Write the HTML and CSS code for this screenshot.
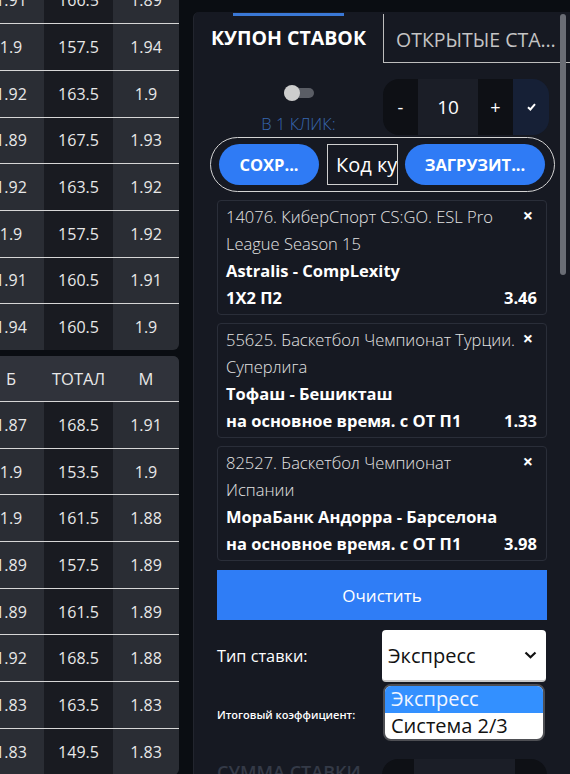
FILE: index.html
```html
<!DOCTYPE html>
<html lang="ru">
<head>
    <meta charset="UTF-8">
    <meta name="viewport" content="width=device-width, initial-scale=1.0">
    <title>Купон ставок</title>
    <link rel="stylesheet" href="styles.css">
</head>
<body>
    <!-- Линия тоталов -->
    <div class="lines">
        <div class="odds">
            <div class="odds-row"><span>1.91</span><span class="mid">166.5</span><span>1.89</span></div>
            <div class="odds-row"><span>1.9</span><span class="mid">157.5</span><span>1.94</span></div>
            <div class="odds-row"><span>1.92</span><span class="mid">163.5</span><span>1.9</span></div>
            <div class="odds-row"><span>1.89</span><span class="mid">167.5</span><span>1.93</span></div>
            <div class="odds-row"><span>1.92</span><span class="mid">163.5</span><span>1.92</span></div>
            <div class="odds-row"><span>1.9</span><span class="mid">157.5</span><span>1.92</span></div>
            <div class="odds-row"><span>1.91</span><span class="mid">160.5</span><span>1.91</span></div>
            <div class="odds-row"><span>1.94</span><span class="mid">160.5</span><span>1.9</span></div>
        </div>
        <div class="odds">
            <div class="odds-head"><span>Б</span><span>ТОТАЛ</span><span>М</span></div>
            <div class="odds-row"><span>1.87</span><span class="mid">168.5</span><span>1.91</span></div>
            <div class="odds-row"><span>1.9</span><span class="mid">153.5</span><span>1.9</span></div>
            <div class="odds-row"><span>1.9</span><span class="mid">161.5</span><span>1.88</span></div>
            <div class="odds-row"><span>1.89</span><span class="mid">157.5</span><span>1.89</span></div>
            <div class="odds-row"><span>1.89</span><span class="mid">161.5</span><span>1.89</span></div>
            <div class="odds-row"><span>1.92</span><span class="mid">168.5</span><span>1.88</span></div>
            <div class="odds-row"><span>1.83</span><span class="mid">163.5</span><span>1.83</span></div>
            <div class="odds-row"><span>1.83</span><span class="mid">149.5</span><span>1.83</span></div>
        </div>
    </div>

    <!-- Купон -->
    <div class="coupon">
        <div class="scroll-thumb"></div>

        <div class="tabs">
            <div class="tab tab-active">КУПОН СТАВОК</div>
            <div class="tab">ОТКРЫТЫЕ СТАВКИ</div>
        </div>

        <div class="controls">
            <div class="one-click">
                <div class="switch"><span class="knob"></span></div>
                <div class="one-click-label">В 1 КЛИК:</div>
            </div>
            <div class="stepper">
                <button class="st-btn">-</button>
                <div class="st-val">10</div>
                <button class="st-btn">+</button>
                <button class="st-ok">
                    <svg width="9" height="8" viewBox="0 0 9 8"><path d="M1 4.2 L3.4 6.5 L8 1.2" fill="none" stroke="#fff" stroke-width="2"/></svg>
                </button>
            </div>
        </div>

        <div class="code-box">
            <button class="pill-btn pill-save">СОХР...</button>
            <input class="code-input" type="text" placeholder="Код купона">
            <button class="pill-btn pill-load">ЗАГРУЗИТ...</button>
        </div>

        <div class="bets">
            <div class="bet">
                <div class="bet-head">
                    <span class="bet-title">14076. КиберСпорт CS:GO. ESL Pro League Season 15</span>
                    <span class="bet-close">×</span>
                </div>
                <div class="bet-match">Astralis - CompLexity</div>
                <div class="bet-market"><span>1X2 П2</span><span>3.46</span></div>
            </div>
            <div class="bet">
                <div class="bet-head">
                    <span class="bet-title">55625. Баскетбол Чемпионат Турции. Суперлига</span>
                    <span class="bet-close">×</span>
                </div>
                <div class="bet-match">Тофаш - Бешикташ</div>
                <div class="bet-market"><span>на основное время. с ОТ П1</span><span>1.33</span></div>
            </div>
            <div class="bet">
                <div class="bet-head">
                    <span class="bet-title">82527. Баскетбол Чемпионат Испании</span>
                    <span class="bet-close">×</span>
                </div>
                <div class="bet-match">МораБанк Андорра - Барселона</div>
                <div class="bet-market"><span>на основное время. с ОТ П1</span><span>3.98</span></div>
            </div>

            <button class="clear-btn">Очистить</button>

            <div class="bet-type">
                <span>Тип ставки:</span>
                <div class="select-wrap">
                    <div class="select">
                        <span>Экспресс</span>
                        <svg width="13" height="8" viewBox="0 0 13 8"><path d="M1.5 1.5 L6.5 6.3 L11.5 1.5" fill="none" stroke="#111" stroke-width="2.2"/></svg>
                    </div>
                    <ul class="select-menu">
                        <li class="selected">Экспресс</li>
                        <li>Система 2/3</li>
                    </ul>
                </div>
            </div>

            <div class="total-coef">Итоговый коэффициент:</div>

            <div class="stake">
                <span class="stake-label">СУММА СТАВКИ</span>
                <div class="stake-box"><span></span><span class="stake-mid"></span><span></span></div>
            </div>
        </div>
    </div>
</body>
</html>
```

FILE: styles.css
```css
* {
    box-sizing: border-box;
}

body {
    margin: 0;
    height: 774px;
    overflow: hidden;
    display: flex;
    background-color: #0a0d12;
    font-family: 'Open Sans', 'Noto Sans', sans-serif;
    color: #ffffff;
}

button {
    font-family: inherit;
    border: none;
    color: #ffffff;
    cursor: pointer;
    padding: 0;
}

/* ---- tables on the left ---- */
.lines {
    width: 179px;
    flex: none;
    overflow: hidden;
    margin-top: -23.5px;
    display: flex;
    flex-direction: column;
    gap: 6px;
}

.odds {
    width: 201px;
    margin-left: -22px;
    border-radius: 6px;
    overflow: hidden;
    background-color: #2a2d34;
    flex: none;
}

.odds-row,
.odds-head {
    display: grid;
    grid-template-columns: 66px 69px 66px;
    font-size: 16px;
    color: #e8e8e8;
}

.odds-row {
    height: 46.7px;
    border-top: 1px solid #d6d6d6;
}

.odds-row:first-child {
    border-top: none;
}

.odds-head {
    height: 45px;
    background-color: #30333b;
    font-size: 16.5px;
}

.odds-row span,
.odds-head span {
    display: flex;
    align-items: center;
    justify-content: center;
}

.odds-row .mid {
    background-color: #191b21;
}

/* ---- coupon ---- */
.coupon {
    position: relative;
    flex: 1;
    min-width: 0;
    margin-left: 14px;
    margin-top: 12px;
    background-color: #161922;
    border-left: 1px solid #22252e;
    border-top-left-radius: 6px;
}

.scroll-thumb {
    position: absolute;
    right: 4px;
    top: 2px;
    width: 6px;
    height: 261px;
    border-radius: 3px;
    background-color: #6a6d75;
}

.tabs {
    display: flex;
    height: 51px;
}

.tab {
    flex: 1;
    min-width: 0;
    display: block;
    padding: 3px 4px 0 12px;
    margin-top: 2px;
    font-size: 19.5px;
    line-height: 45px;
    color: #c4c4c4;
    border-left: 1px solid #bdbdbd;
    border-bottom: 1px solid #bdbdbd;
    white-space: nowrap;
    overflow: hidden;
    text-overflow: ellipsis;
}

.tab-active {
    position: relative;
    flex: none;
    width: 189px;
    margin-top: 0;
    padding: 3px 0 0;
    line-height: 45px;
    text-align: center;
    border: none;
    font-weight: 700;
    color: #ffffff;
    overflow: visible;
}

.tab-active::before {
    content: "";
    position: absolute;
    top: 1px;
    left: 39px;
    width: 111px;
    height: 3px;
    background-color: #3a78d6;
}

.controls {
    display: flex;
    margin-top: 16px;
}

.one-click {
    width: 189px;
    padding-left: 20px;
    display: flex;
    flex-direction: column;
    align-items: center;
    padding-top: 9px;
}

.switch {
    width: 30px;
    height: 10px;
    border-radius: 5px;
    background-color: #5a5d65;
    display: flex;
    align-items: center;
}

.knob {
    width: 16px;
    height: 16px;
    flex: none;
    border-radius: 50%;
    background-color: #cdcdcd;
}

.one-click-label {
    margin-top: 14px;
    font-size: 16.5px;
    font-weight: 300;
    color: #3767b0;
}

.stepper {
    display: flex;
    width: 166px;
    height: 56px;
    border-radius: 16px;
    overflow: hidden;
}

.st-btn {
    width: 35px;
    background-color: #0e1015;
    font-size: 18px;
}

.st-val {
    width: 60px;
    display: flex;
    align-items: center;
    justify-content: center;
    background-color: #1b1e27;
    font-size: 19px;
}

.st-ok {
    width: 36px;
    background-color: #162036;
    display: flex;
    align-items: center;
    justify-content: center;
}

.code-box {
    display: flex;
    align-items: center;
    gap: 8px;
    height: 55px;
    margin: 2px 15px 0 16px;
    padding: 0 9px 0 8px;
    border: 1px solid #d4d4d4;
    border-radius: 28px;
}

.pill-btn {
    height: 41px;
    border-radius: 21px;
    background-color: #2f7bf5;
    font-size: 16.5px;
    font-weight: 700;
}

.pill-save {
    width: 100px;
}

.pill-load {
    flex: 1;
    margin-left: -1px;
}

.code-input {
    width: 71px;
    height: 41px;
    padding: 0 0 0 8px;
    border: 1px solid #cfcfcf;
    background-color: transparent;
    color: #ffffff;
    font-family: inherit;
    font-size: 20px;
}

.code-input::placeholder {
    color: #ffffff;
}

.bets {
    display: flex;
    flex-direction: column;
    gap: 8px;
    margin-top: 8px;
    padding: 0 23px 0 23px;
}

.bet {
    border: 1px solid #2a2e39;
    border-radius: 4px;
    padding: 2px 9px 3px 8px;
    font-size: 16.5px;
    line-height: 27px;
}

.bet-head {
    display: flex;
    justify-content: space-between;
    align-items: flex-start;
}

.bet-title {
    flex: 0 1 290px;
    font-weight: 300;
    color: #e4e4e4;
}

.bet-close {
    font-weight: 700;
    font-size: 18px;
    margin-right: 4px;
    line-height: 25px;
}

.bet-match,
.bet-market {
    font-weight: 700;
}

.bet-market {
    display: flex;
    justify-content: space-between;
}

.clear-btn {
    height: 50px;
    margin-top: 1px;
    background-color: #2f7df6;
    font-size: 17px;
}

.bet-type {
    display: flex;
    justify-content: space-between;
    align-items: center;
    margin-top: 2px;
    font-size: 16.3px;
}

.select-wrap {
    position: relative;
    width: 164px;
    margin-right: 1px;
}

.select {
    height: 52px;
    display: flex;
    align-items: center;
    justify-content: space-between;
    padding: 0 9px 0 6px;
    background-color: #ffffff;
    border-radius: 4px;
    border-bottom: 2px solid #c9c9c9;
    color: #111111;
    font-size: 20px;
}

.select-menu {
    position: absolute;
    top: 54px;
    left: 1px;
    width: 162px;
    margin: 0;
    padding: 0;
    list-style: none;
    background-color: #ffffff;
    border: 2px solid #4e4f54;
    border-radius: 8px;
    overflow: hidden;
    font-size: 20px;
    color: #111111;
    line-height: 26.5px;
}

.select-menu li {
    padding-left: 6px;
}

.select-menu .selected {
    background-color: #3390ff;
    color: #f2f6ff;
}

.total-coef {
    height: 48px;
    display: flex;
    align-items: center;
    font-size: 11px;
    font-weight: 600;
}

.stake {
    display: flex;
    justify-content: space-between;
    margin-top: 13px;
}

.stake-label {
    line-height: 26px;
    font-size: 18px;
    font-weight: 600;
    color: #343a47;
}

.stake-box {
    display: flex;
    width: 165px;
    height: 56px;
    border-radius: 16px;
    overflow: hidden;
    background-color: #0e1015;
}

.stake-box span {
    width: 33px;
}

.stake-box .stake-mid {
    width: 104px;
    background-color: #1b1e27;
}
```
